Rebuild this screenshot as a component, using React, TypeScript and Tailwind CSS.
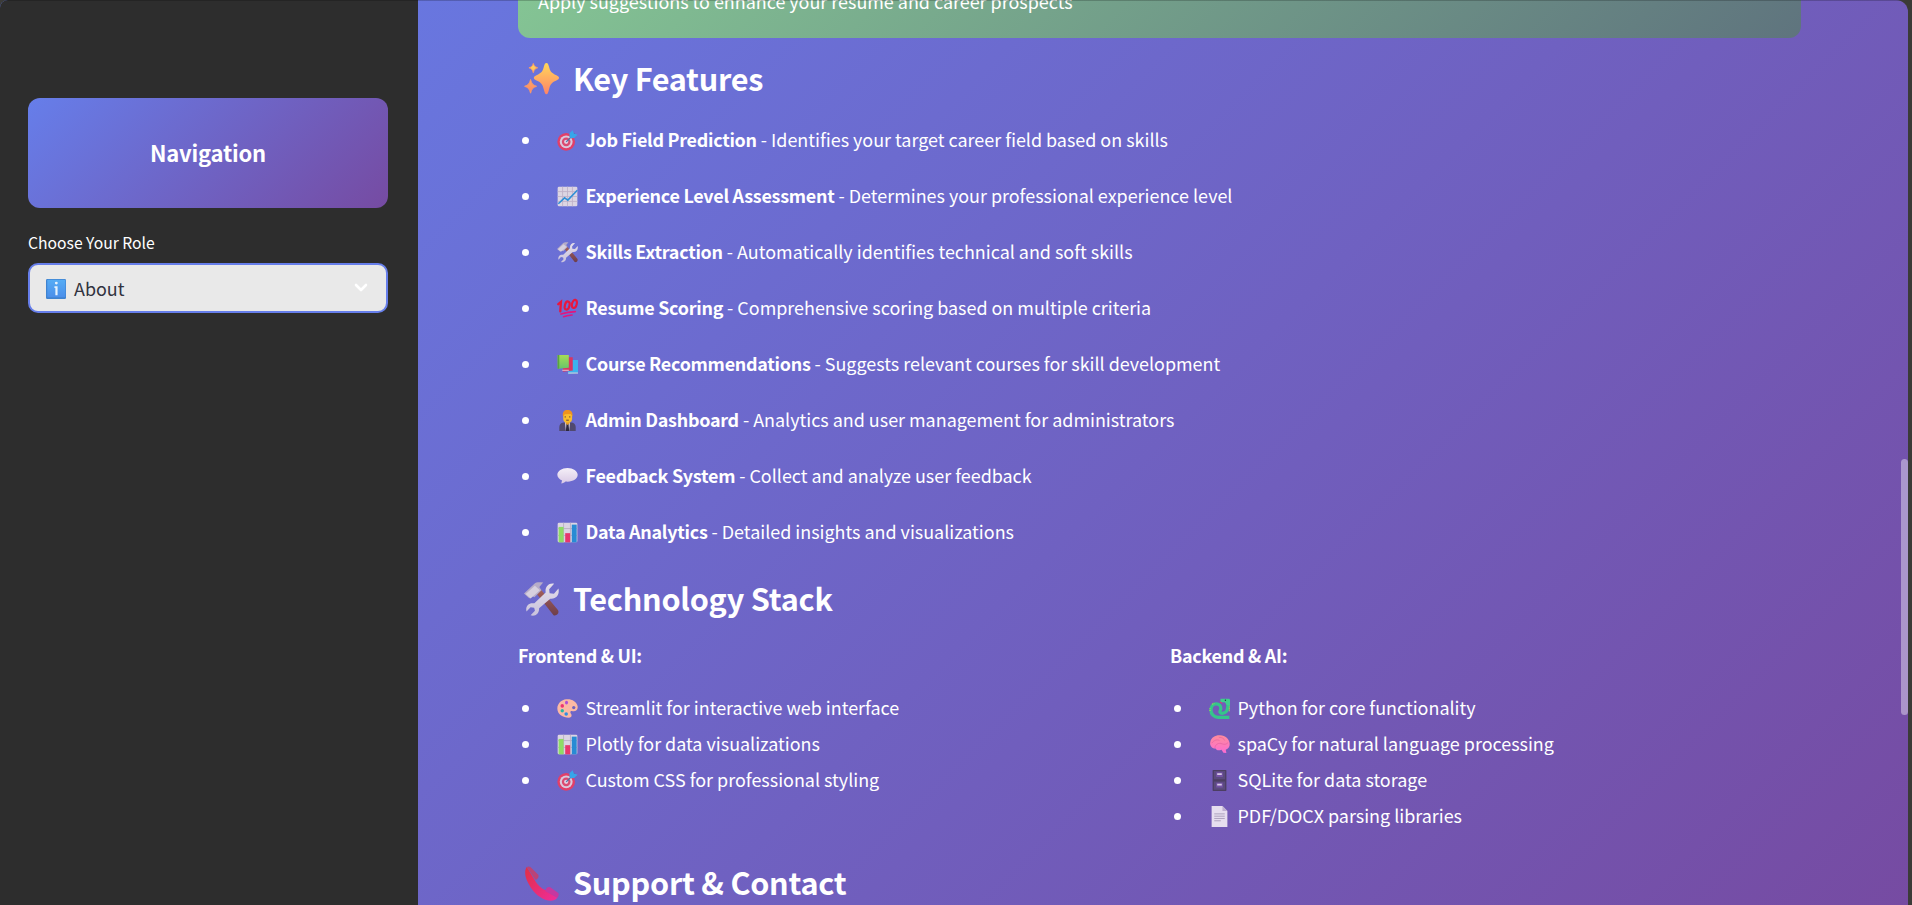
import React from "react";

const G = ({ id, a, b }: { id: string; a: string; b: string }) => (
  <linearGradient id={id} x1="0" y1="0" x2="0" y2="1">
    <stop offset="0" stopColor={a} />
    <stop offset="1" stopColor={b} />
  </linearGradient>
);

const art: Record<string, React.ReactNode> = {
  sparkles: (
    <>
      <defs><G id="spk" a="#ffd75a" b="#ff8367" /></defs>
      <g fill="url(#spk)">
        <path d="M20.500 1c1.200 0 1.700 1 2.300 3.200 1.200 4.600 2.200 6 6.800 7.900 1.800.8 2.400 1.500 2.400 2.400s-.6 1.700-2.400 2.400c-4.600 1.900-5.600 3.500-6.800 8.500-.6 2.400-1.100 4.100-2.300 4.100s-1.700-1.700-2.300-4.100c-1.200-5-2.200-6.600-6.800-8.500-1.800-.7-2.400-1.500-2.400-2.400s.6-1.600 2.400-2.400c4.600-1.900 5.600-3.300 6.800-7.900.6-2.200 1.100-3.200 2.300-3.200z" />
        <path d="M8.500 1.300c.8 2.500 1.500 3.100 4 4-2.500.9-3.200 1.600-4 4.500-.8-2.900-1.500-3.600-4-4.500 2.500-.9 3.200-1.500 4-4zM6 16c1 3.800 2 5 5.500 6.200-3.500 1.200-4.500 2.500-5.500 6.300-1-3.800-2-5.100-5.500-6.300 3.500-1.200 4.500-2.400 5.500-6.200z" stroke="#fb9a66" strokeWidth=".8" />
      </g>
    </>
  ),
  target: (
    <>
      <circle cx="14" cy="18" r="13.500" fill="#e23f68" />
      <circle cx="14" cy="18" r="9.800" fill="#dbc8dc" />
      <circle cx="14" cy="18" r="6.600" fill="#db4a70" />
      <circle cx="14" cy="18" r="3.300" fill="#e3cfdf" />
      <path d="M14 18L27 5" stroke="#4a74a8" strokeWidth="1.800" />
      <path d="M19 10l0-5 5-4.500 1.500 5 6 1.800-5.500 5-5 .2z" fill="#36a5ea" />
    </>
  ),
  chartUp: (
    <>
      <rect x="1" y="1" width="30" height="30" rx="2" fill="#dcd5e3" />
      <path d="M8.500 1v30M16 1v30M23.500 1v30M1 8.500h30M1 16h30M1 23.500h30" stroke="#bfb2c8" strokeWidth="1.300" />
      <path d="M2 27L11.500 18l5 3.500L31 6.500" fill="none" stroke="#2f8fd6" strokeWidth="2.400" />
    </>
  ),
  tools: (
    <>
      <defs><G id="hnd" a="#a5605b" b="#6d3e4b" /><G id="stl" a="#e4deea" b="#c9c2dc" /></defs>
      <path d="M11 10l4-3.500L31 25.500c1.500 2.500-.5 6-4 5z" fill="url(#hnd)" />
      <path d="M0 10.500L9.500 1.500C11 .3 13 .1 17.500.5L14 4.500l2 3-6.500 6.500-3.500-2L5 15z" fill="#b6acc8" />
      <path d="M1.500 11L10 3.500l4.500 4L6 15z" fill="#d7d0df" />
      <path d="M27.500 1.500l-4.500 5.200.4 3.600 4 .4L31.500 6c1.200 5-1.500 10-7.500 9.300L13.800 24c.3 4.600-3.300 8-7.800 6.500l4-4.200-.7-2.800-3.300-.5L2.300 27C1 22.500 4 18.500 9.500 19.500L19.800 9.500C19 4.500 22.500.5 27.500 1.500z" fill="url(#stl)" />
    </>
  ),
  hundred: (
    <g fill="none" stroke="#e9163d" strokeLinecap="round">
      <path d="M2 9.500L6 6 5 20.500" strokeWidth="3.500" />
      <ellipse cx="15.500" cy="11.500" rx="3.500" ry="6.300" transform="rotate(14 15.500 11.500)" strokeWidth="3.300" />
      <ellipse cx="26.500" cy="9" rx="3.500" ry="6.300" transform="rotate(14 26.500 9)" strokeWidth="3.300" />
      <path d="M6 24.500c6-1.800 14-3.300 22-3.700M10 28.500c4-1.500 8-2 13-2.500" stroke="#e3157e" strokeWidth="2.400" />
    </g>
  ),
  books: (
    <>
      <defs><G id="grn" a="#a7dc55" b="#66c46b" /></defs>
      <path d="M17 9h15v19.500l-15 2.500z" fill="#3bb3ee" />
      <path d="M17 28h15v2H17z" fill="#bcc7dc" />
      <path d="M9 5h15v20l-15 2z" fill="#d83562" />
      <path d="M8 24h10v1.700H8z" fill="#e4b5c8" />
      <path d="M1 1.500h17V21l-17 1.500z" fill="url(#grn)" />
      <path d="M1 1.500h2.500v20.600L1 22.500z" fill="#5aa43f" />
    </>
  ),
  admin: (
    <>
      <path d="M3.500 32v-6c0-4 3-7 7-7h11c4 0 7 3 7 7v6z" fill="#50496f" />
      <path d="M12 18h8l-1.500 14h-5z" fill="#ddd5e6" />
      <path d="M14.500 20h3l1 12h-5z" fill="#2d2840" />
      <path d="M13 15h6.500v5L16 23l-3-3z" fill="#e59a25" />
      <rect x="9.500" y="3" width="13.500" height="16" rx="5.500" fill="#f9bd2e" />
      <path d="M9 9.500C8 3 11 0 16 0s8.500 3 7.500 9.500L21 6l-9 .3z" fill="#ee931f" />
      <path d="M12.500 9.500v2M19.500 9.500v2M14 15.500h4" stroke="#684231" strokeWidth="1.500" />
    </>
  ),
  speech: (
    <>
      <defs><G id="bub" a="#f5f0f8" b="#d9c9e5" /></defs>
      <path d="M16 3c8.500 0 15.500 4.500 15.500 10.500S24.500 24 16 24c-1 0-2-.1-3-.2-1.500 1.700-4 2.700-6.500 2.700l1.200-4.300C3.500 20.300.5 17.200.5 13.500.5 7.500 7.500 3 16 3z" fill="url(#bub)" />
    </>
  ),
  bars: (
    <>
      <rect x="1" y="1" width="30" height="30" rx="2" fill="#dcd5e3" />
      <path d="M10 1v30M20.500 1v30M1 10h30M1 20.500h30" stroke="#b9adc3" strokeWidth="1.300" />
      <path d="M2.500 7.500h7.500V31H2.500z" fill="#8edc65" />
      <path d="M12.500 17h7.500v14h-7.500z" fill="#e7376d" />
      <path d="M22.500 4h7.500v27h-7.500z" fill="#288bd4" />
    </>
  ),
  palette: (
    <>
      <path d="M14 2C21 .8 30.500 5 31.500 13c.6 5.500-3.500 8-8 7-3-.6-4 1.500-2.200 4 2 2.700.5 6-3.300 6C9 30 .5 25 .5 16 .5 8 7 3 14 2z" fill="#fbb9a4" />
      <circle cx="25.500" cy="14.500" r="2.500" fill="#6d62bf" />
      <ellipse cx="14.500" cy="7" rx="2.300" ry="3" fill="#b14ed6" />
      <circle cx="8" cy="12" r="2.700" fill="#ed3672" />
      <circle cx="8" cy="19.500" r="2.600" fill="#28b9a4" />
      <circle cx="14" cy="24.500" r="2.700" fill="#318fe0" />
    </>
  ),
  snake: (
    <>
      <path d="M31 29.500H14C7.500 29.500 3 24.500 3 18.500S6.500 9 11 9s7 3 7 7c0 3-2 4-1.200 5.700 1.500 2.800 7.500 1.800 10-1.700C29 17 29 12 29 5" fill="none" stroke="#35c58a" strokeWidth="5" />
      <path d="M17.500 1h12.500q2 0 2 2v9l-5-1.500-3-4h-6.500z" fill="#3fd08c" />
      <circle cx="25" cy="3.500" r="1.100" fill="#173e39" />
      <path d="M1.500 15.500v5M5 9.500l3-1.500M31 13v7" stroke="#b6dc42" strokeWidth="1.600" strokeDasharray="1.600 1.200" />
      <path d="M16.500 6l3.500 2" stroke="#e63a68" strokeWidth="1.500" />
    </>
  ),
  brain: (
    <>
      <defs><G id="brn" a="#ff8c9c" b="#fb6bd2" /></defs>
      <path d="M2 12C3.500 5 10 1.500 17 2c8 .3 14 6 14.500 13 .3 4.500-2 8-6 9l1 5-4.500-.5-3-4.500c-4 1.800-7.500 1-9-2C5 22.500 .5 17.500 2 12z" fill="url(#brn)" />
      <path d="M4 14c4-5 9-6 12-4M9 21c1-6 6-8 11-6 4 1.500 7 .5 9-2M15 5c5 0 8 2 9 5" fill="none" stroke="#e4609f" strokeWidth="1" />
    </>
  ),
  cabinet: (
    <>
      <rect x="5.500" y="0" width="21" height="32" rx="1" fill="#4c3e62" />
      <path d="M7.500 1.500h17V14h-17zM7.500 17.500h17V30h-17z" fill="#5b4a7e" />
      <path d="M11 3.500h10v7H11zM11 19.500h10v7H11z" fill="#7452a6" />
      <path d="M12.500 5h7v2.500h-7zM12.500 21h7v2.500h-7z" fill="#dacbe8" />
    </>
  ),
  page: (
    <>
      <path d="M4 0h16.500L28 7.500V32H4z" fill="#e6deef" />
      <path d="M20.500 0L28 7.500h-7.500z" fill="#bdafd0" />
      <path d="M8 12h16M8 15.500h16M8 19h16M8 22.500h10" stroke="#a99db9" strokeWidth="1.400" />
    </>
  ),
  phone: (
    <>
      <defs>
        <linearGradient id="phn" x1="0" y1="0" x2="1" y2="1">
          <stop offset="0" stopColor="#e02f46" />
          <stop offset="1" stopColor="#ef2d9c" />
        </linearGradient>
      </defs>
      <path d="M2.500 1C.5 4 .5 8.500 3 14c4 8.500 9.500 14.500 17 17 4.500 1.400 8.500.8 10.500-2L19.500 22c-3-1-8-5.500-9.500-9z" fill="url(#phn)" />
      <path d="M2.500 1c2-1 3-.5 5 1.500L13 8c1 1.500-.5 4.500-2.500 4.500z" fill="#bb4377" />
      <path d="M19.500 23c.5-3 2.500-4.500 4.500-3.500l7 5c1.300 1 .8 3-.5 4.500z" fill="#c638a0" />
    </>
  ),
  info: (
    <>
      <defs><G id="inf" a="#55acf5" b="#4b8fea" /></defs>
      <rect x="0" y="0" width="32" height="32" rx="2" fill="#3f83d0" />
      <rect x="2" y="1" width="29" height="28" rx="1.500" fill="url(#inf)" />
      <circle cx="16.500" cy="6.500" r="2.300" fill="#e6f2fd" />
      <path d="M13.500 11.500h5V26h-3.500V14.500h-1.500z" fill="#e6f2fd" />
    </>
  ),
};

const Emoji = ({ name, className }: { name: string; className: string }) => (
  <svg viewBox="0 0 32 32" className={"shrink-0 " + className} aria-hidden="true">{art[name]}</svg>
);

const features = [
  ["target", "Job Field Prediction", "Identifies your target career field based on skills"],
  ["chartUp", "Experience Level Assessment", "Determines your professional experience level"],
  ["tools", "Skills Extraction", "Automatically identifies technical and soft skills"],
  ["hundred", "Resume Scoring", "Comprehensive scoring based on multiple criteria"],
  ["books", "Course Recommendations", "Suggests relevant courses for skill development"],
  ["admin", "Admin Dashboard", "Analytics and user management for administrators"],
  ["speech", "Feedback System", "Collect and analyze user feedback"],
  ["bars", "Data Analytics", "Detailed insights and visualizations"],
];

const stacks = [
  {
    title: "Frontend & UI:",
    items: [
      ["palette", "Streamlit for interactive web interface"],
      ["bars", "Plotly for data visualizations"],
      ["target", "Custom CSS for professional styling"],
    ],
  },
  {
    title: "Backend & AI:",
    items: [
      ["snake", "Python for core functionality"],
      ["brain", "spaCy for natural language processing"],
      ["cabinet", "SQLite for data storage"],
      ["page", "PDF/DOCX parsing libraries"],
    ],
  },
];

const Item = ({ icon, className, children }: { icon: string; className: string; children: React.ReactNode }) => (
  <li className={"flex items-center whitespace-pre pl-[4px] " + className}>
    <span className="mr-[28px] size-[7px] shrink-0 rounded-full bg-white" />
    <Emoji name={icon} className="mr-[7.500px] size-[21px]" />
    <span className="mb-[2px]">{children}</span>
  </li>
);

const Heading = ({ icon, children }: { icon: string; children: React.ReactNode }) => (
  <h2 className="flex h-[44px] shrink-0 items-center whitespace-pre pl-[6px] text-[30.6px] font-semibold leading-[44px] tracking-[-0.25px]">
    <Emoji name={icon} className="mr-[14px] size-[35px]" />
    <span className="mb-[2px]">{children}</span>
  </h2>
);

export default function App() {
  return (
    <div className="h-[905px] w-[1912px] overflow-hidden bg-[#3b3b38] font-['Noto_Sans_CJK_SC',sans-serif] text-[17.93px] text-white">
      <div className="relative flex h-[905px] w-[1908px] overflow-hidden rounded-tl-[8px] rounded-tr-[12px] bg-[linear-gradient(135deg,#667eea_0%,#764ba2_100%)]">
        <aside className="flex w-[418px] shrink-0 flex-col bg-[#2d2d2d] px-[28px] pt-[98px]">
          <div className="flex h-[110px] w-[360px] items-center justify-center rounded-[12px] bg-[linear-gradient(135deg,#667eea_0%,#764ba2_100%)] text-[22px] font-semibold tracking-[-0.2px]">
            <span className="mb-[2px]">Navigation</span>
          </div>
          <label className="mt-[23px] h-[24px] text-[15.7px] leading-[24px]">Choose Your Role</label>
          <div className="mt-[8px] flex h-[50px] w-[360px] items-center rounded-[10px] border-2 border-[#667eea] bg-[#e9e9e9] pl-[16px] pr-[18px] text-[#31333f]">
            <Emoji name="info" className="mr-[8px] mt-[2px] size-[20px]" />
            <span>About</span>
            <svg viewBox="0 0 14 10" className="ml-auto h-[10px] w-[14px]" fill="none" stroke="#fff" strokeWidth="2.600" strokeLinecap="round" strokeLinejoin="round">
              <path d="M2 2l5 5 5-5" />
            </svg>
          </div>
        </aside>
        <main className="flex w-[1490px] shrink-0 flex-col pl-[100px]">
          <div className="flex h-[38px] w-[1283px] shrink-0 items-end rounded-b-[12px] bg-[linear-gradient(135deg,#84c494_0%,#5f747e_100%)] px-[20px] pb-[24px]">
            <p className="leading-[26px]">Apply suggestions to enhance your resume and career prospects</p>
          </div>
          <div className="h-[19px] shrink-0" />
          <Heading icon="sparkles">Key Features</Heading>
          <ul className="mt-[11px]">
            {features.map(([icon, name, text]) => (
              <Item key={name} icon={icon} className="h-[56px]">
                <b className="font-semibold tracking-[-0.26px]">{name}</b> - {text}
              </Item>
            ))}
          </ul>
          <div className="h-[17px] shrink-0" />
          <Heading icon="tools">Technology Stack</Heading>
          <div className="mt-[18px] flex h-[222px] shrink-0">
            {stacks.map((s) => (
              <section key={s.title} className="w-[652px] shrink-0">
                <h3 className="h-[32px] font-semibold leading-[32px] tracking-[-0.26px]">{s.title}</h3>
                <ul className="mt-[19px]">
                  {s.items.map(([icon, text]) => (
                    <Item key={text} icon={icon} className="h-[36px]">{text}</Item>
                  ))}
                </ul>
              </section>
            ))}
          </div>
          <Heading icon="phone">Support &amp; Contact</Heading>
        </main>
        <div className="absolute right-0 top-[459px] h-[256px] w-[7px] rounded-full bg-white/40" />
        <div className="absolute left-0 top-0 h-px w-full bg-black/20" />
      </div>
    </div>
  );
}
